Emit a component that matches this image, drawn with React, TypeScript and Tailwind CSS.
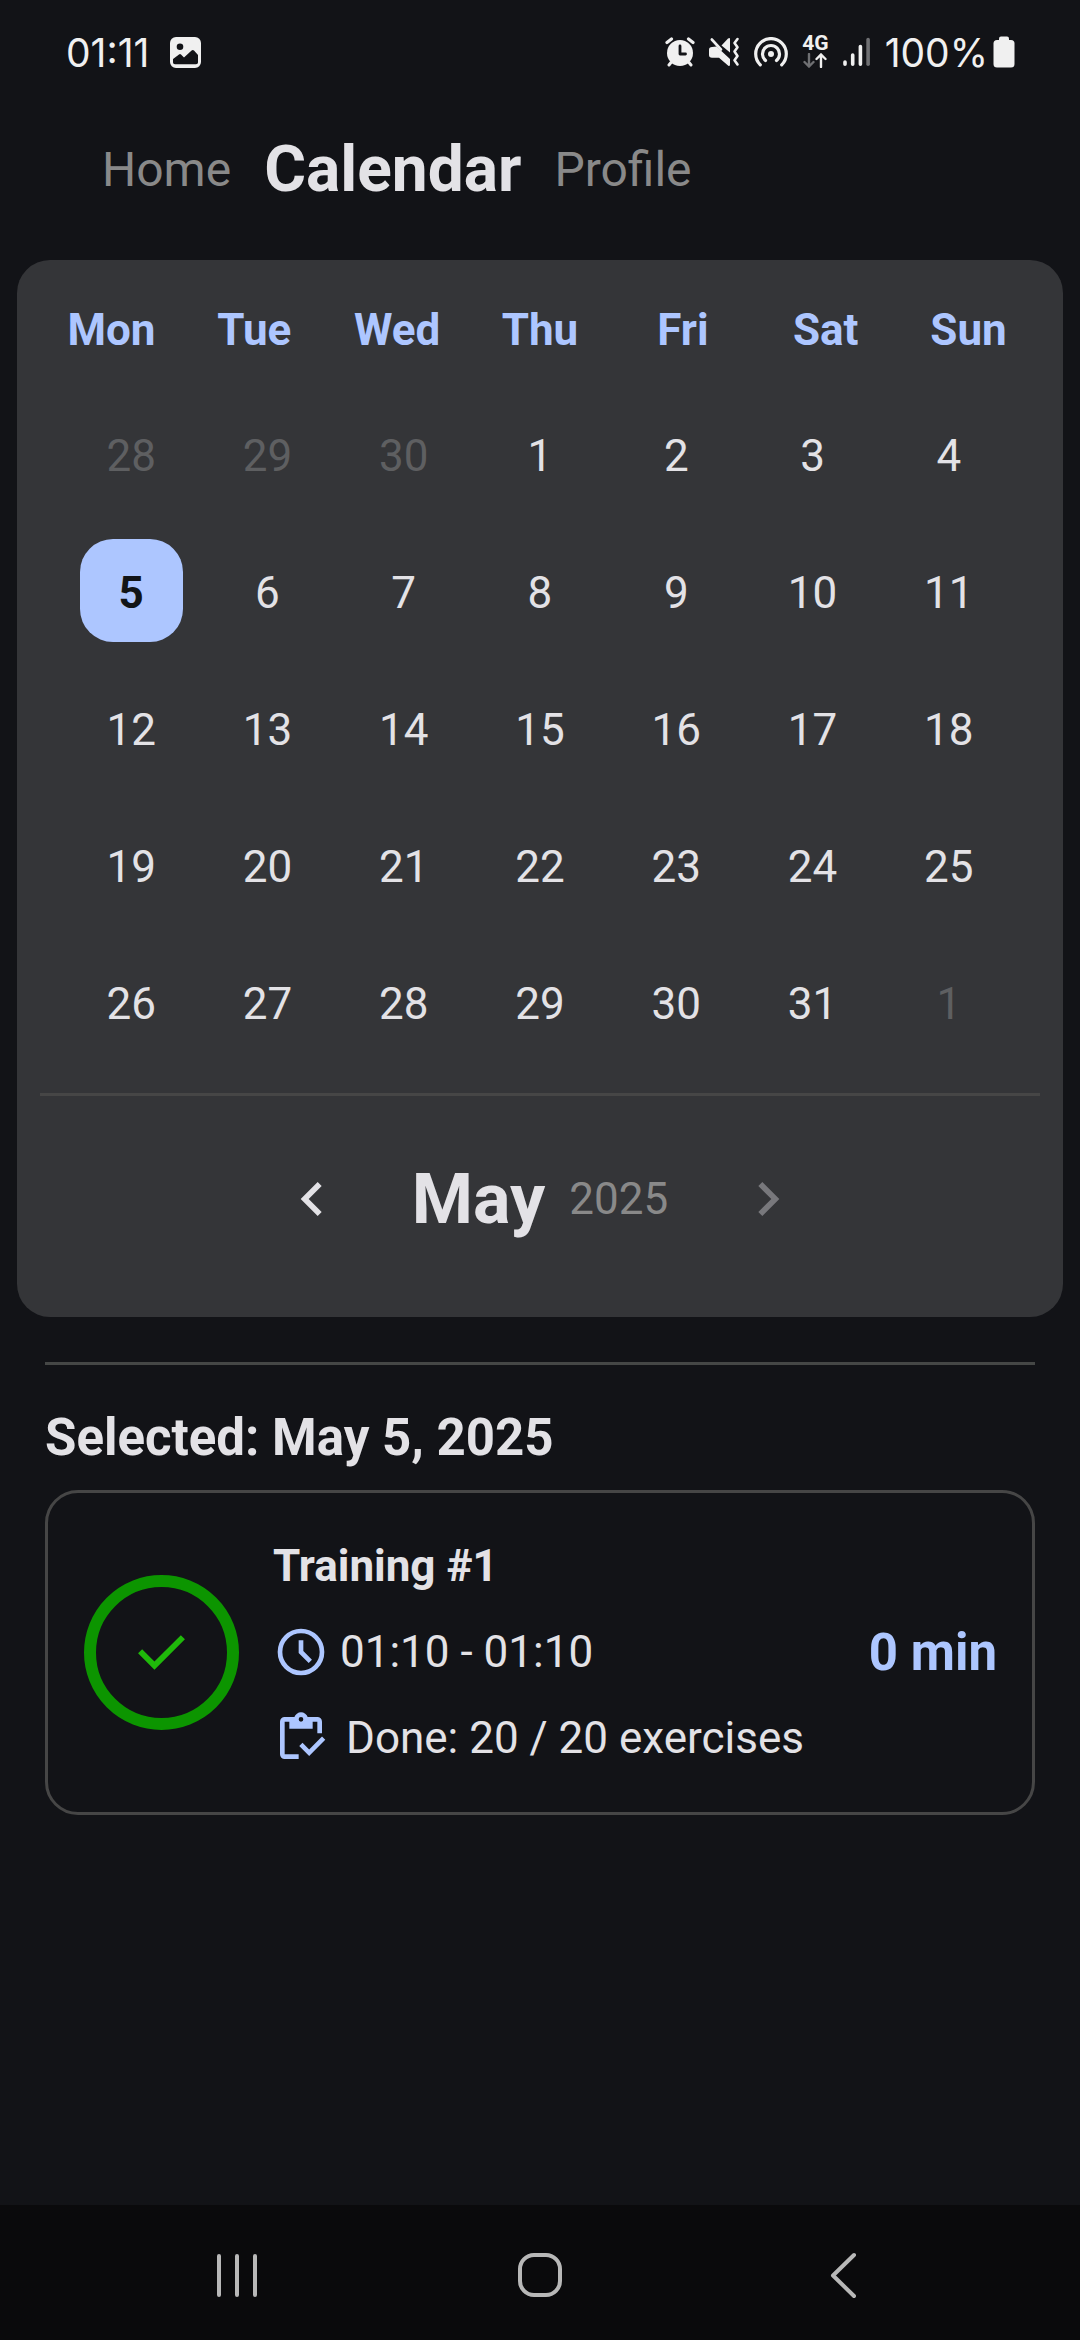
import React from "react";

const WEEKDAYS = ["Mon", "Tue", "Wed", "Thu", "Fri", "Sat", "Sun"];

type Day = { day: number; outside: boolean };

const DAYS: Day[] = [
  ...[28, 29, 30].map((day) => ({ day, outside: true })),
  ...Array.from({ length: 31 }, (_, i) => ({ day: i + 1, outside: false })),
  { day: 1, outside: true },
];

const SELECTED = 5;

function ImageIcon() {
  return (
    <svg viewBox="0 0 31 31" className="size-[31px]" aria-hidden="true">
      <path
        fill="#f0f0f0"
        fillRule="evenodd"
        d="M6 0h19a6 6 0 0 1 6 6v19a6 6 0 0 1-6 6H6a6 6 0 0 1-6-6V6a6 6 0 0 1 6-6zM10 6.400a3.300 3.300 0 1 0 0 6.600 3.300 3.300 0 0 0 0-6.600zM3 22v3.500Q3 27.300 5 27.300h21Q28 27.300 28 25.500V18l-4-4.400q-1.200-1-2.400 0L14 20.500l-3-3q-1-.8-2 0z"
      />
    </svg>
  );
}

function AlarmIcon() {
  return (
    <svg viewBox="0 0 30 30" className="size-[30px]" aria-hidden="true">
      <circle cx="15" cy="16" r="13" fill="#f0f0f0" />
      <path d="M2 5.500 6.500 2M28 5.500 23.500 2" stroke="#f0f0f0" strokeWidth="3.200" strokeLinecap="round" />
      <path d="M6 25.500 4 28M24 25.500l2 2.500" stroke="#f0f0f0" strokeWidth="3" strokeLinecap="round" />
      <path d="M15 9v8h5.500" stroke="#121317" strokeWidth="2.800" fill="none" strokeLinecap="round" strokeLinejoin="round" />
    </svg>
  );
}

function MuteVibrateIcon() {
  return (
    <svg viewBox="0 0 31 30" className="h-[30px] w-[31px]" aria-hidden="true">
      <path d="M21 2v13.500L12.500 8.500 19 1.600Q21 0 21 2z" fill="#f0f0f0" />
      <path d="M7.500 9.500 21 22v5.500q0 2.300-2 .9L10 20.800H3q-3 0-3-2.700v-5.400q0-2.800 3-2.800z" fill="#f0f0f0" />
      <path d="M2.800 2.500 12 12.500" stroke="#f0f0f0" strokeWidth="2.600" strokeLinecap="round" />
      <path
        d="m28.500 2-3 4 3 4.300-3 4.300 3 4.300-3 4.300 3 4.300"
        stroke="#f0f0f0"
        strokeWidth="2.600"
        fill="none"
        strokeLinecap="round"
        strokeLinejoin="round"
      />
    </svg>
  );
}

function HotspotIcon() {
  return (
    <svg viewBox="0 0 34 30" className="h-[30px] w-[34px]" aria-hidden="true">
      <g fill="none" stroke="#f0f0f0" strokeWidth="3.200" strokeLinecap="round">
        <path d="M6.300 27.800a15.300 15.300 0 1 1 21.400 0" />
        <path d="M11.500 23.500a8.500 8.500 0 1 1 11 0" />
      </g>
      <circle cx="17" cy="17" r="3" fill="#f0f0f0" />
    </svg>
  );
}

function DataArrowsIcon() {
  return (
    <svg viewBox="0 0 24 15" className="h-[15px] w-[24px]" aria-hidden="true">
      <path d="M6 1v12M1.500 9 6 13.500 10.500 9" stroke="#6f7073" strokeWidth="2.400" fill="none" strokeLinecap="round" />
      <path d="M18 14V2M13.500 6 18 1.500 22.500 6" stroke="#f0f0f0" strokeWidth="2.400" fill="none" strokeLinecap="round" />
    </svg>
  );
}

function SignalIcon() {
  return (
    <svg viewBox="0 0 28 30" className="h-[30px] w-[28px]" aria-hidden="true">
      <g strokeWidth="3.600" strokeLinecap="round" stroke="#f0f0f0">
        <path d="M2 25v2.200M9.700 18v9.200M17.400 9.500v17.700" />
        <path d="M25.100 2.500v24.700" stroke="#6f7073" />
      </g>
    </svg>
  );
}

function BatteryIcon() {
  return (
    <svg viewBox="0 0 22 32" className="h-[32px] w-[22px]" aria-hidden="true">
      <rect x="6" y="0.500" width="10" height="8" rx="2" fill="#f0f0f0" />
      <rect x="0.500" y="4" width="21" height="27.500" rx="3.500" fill="#f0f0f0" />
    </svg>
  );
}

function StatusBar() {
  return (
    <div className="flex h-[104px] items-center justify-between pr-[65px] pl-[66px] font-['Inter',sans-serif] text-[39px] leading-none text-[#f0f0f0]">
      <div className="flex items-center gap-[21px]">
        <span>01:11</span>
        <ImageIcon />
      </div>
      <div className="flex items-center gap-[14px]">
        <AlarmIcon />
        <MuteVibrateIcon />
        <HotspotIcon />
        <div className="flex flex-col items-center gap-[2px]">
          <span className="font-['Roboto',sans-serif] text-[21px] leading-[15px] font-bold">4G</span>
          <DataArrowsIcon />
        </div>
        <SignalIcon />
        <div className="flex items-center gap-[5px]">
          <span>100%</span>
          <BatteryIcon />
        </div>
      </div>
    </div>
  );
}

function Tabs() {
  return (
    <nav className="mb-[25px] flex h-[131px] items-center gap-[33px] pl-[102px] text-[48px] leading-none text-[#898989]">
      <a href="#home">Home</a>
      <a href="#calendar" aria-current="page" className="text-[64px] font-bold text-[#e3e2e6]">
        Calendar
      </a>
      <a href="#profile">Profile</a>
    </nav>
  );
}

function DayCell({ day, outside }: Day) {
  const selected = !outside && day === SELECTED;
  const tone = selected
    ? "bg-[#adc6ff] font-bold text-[#111417]"
    : outside
      ? "text-[#5e5f61]"
      : "text-[#e3e2e6]";
  return (
    <div className="flex h-[137px] items-center justify-center">
      <button type="button" aria-pressed={selected} className={`size-[103px] rounded-[33px] pt-1 text-[44px] leading-none ${tone}`}>
        {day}
      </button>
    </div>
  );
}

function Chevron({ d }: { d: string }) {
  return (
    <svg viewBox="0 0 24 24" className="size-[68px]" fill="currentColor" aria-hidden="true">
      <path d={d} />
    </svg>
  );
}

function Calendar() {
  return (
    <section aria-label="Calendar" className="mx-[17px] rounded-[33px] bg-[#343538] px-[23px] pt-[14px] pb-[52px]">
      <div className="grid h-[111px] grid-cols-7 items-center text-center text-[44px] leading-none font-bold text-[#adc6ff]">
        {WEEKDAYS.map((name) => (
          <span key={name}>{name}</span>
        ))}
      </div>
      <div className="grid grid-cols-7 px-[23px]">
        {DAYS.map((d, i) => (
          <DayCell key={i} {...d} />
        ))}
      </div>
      <hr className="mt-[23px] border-t-[3px] border-[#464646]" />
      <div className="mt-[37px] flex items-center justify-center gap-[34px]">
        <button type="button" aria-label="Previous month" className="flex size-[132px] items-center justify-center text-[#e3e2e6]">
          <Chevron d="M15.410 7.410 14 6l-6 6 6 6 1.410-1.410L10.830 12z" />
        </button>
        <h2 className="flex items-center gap-6 leading-none">
          <span className="text-[70px] font-bold text-[#e3e2e6]">May</span>
          <span className="text-[44px] font-normal text-[#898989]">2025</span>
        </h2>
        <button type="button" aria-label="Next month" className="flex size-[132px] items-center justify-center text-[#78787c]">
          <Chevron d="M10 6 8.590 7.410 13.170 12l-4.580 4.590L10 18l6-6z" />
        </button>
      </div>
    </section>
  );
}

function ClockIcon() {
  return (
    <svg viewBox="0 0 24 24" className="size-[56px] text-[#adc6ff]" aria-hidden="true">
      <circle cx="12" cy="12" r="9" fill="none" stroke="currentColor" strokeWidth="2" />
      <path fill="currentColor" d="m15.300 16.700 1.400-1.400-3.700-3.700V7h-2v5.400z" />
    </svg>
  );
}

function ClipboardIcon() {
  return (
    <svg viewBox="0 0 24 24" className="size-[56px] text-[#adc6ff]" fill="currentColor" aria-hidden="true">
      <path
        fillRule="evenodd"
        d="M21 10h-2V5h-2v3H7V5H5v14h6v2H5q-.825 0-1.412-.587T3 19V5q0-.825.588-1.412T5 3h4.175q.275-.875 1.075-1.437T12 1t1.788.563T14.850 3H19q.825 0 1.413.588T21 5zM12 3a1 1 0 1 0 0 2 1 1 0 0 0 0-2z"
      />
      <path d="M22.400 12.800 21 11.400l-5.500 5.500-2.850-2.850-1.400 1.400 4.250 4.250z" />
    </svg>
  );
}

function TrainingCard() {
  return (
    <article className="mx-[45px] flex items-center rounded-[33px] border-[3px] border-[#464646] pt-[30px] pr-[35px] pb-[31px] pl-9 text-[44px] leading-none text-[#e3e2e6]">
      <div className="mr-[34px] flex size-[155px] shrink-0 items-center justify-center rounded-full border-[12px] border-[#0c9500]">
        <svg viewBox="0 0 24 24" className="size-[69px]" fill="#1fb90a" role="img" aria-label="Completed">
          <path d="m9.550 18-5.700-5.700 1.425-1.425L9.550 15.150l9.175-9.175L20.150 7.400z" />
        </svg>
      </div>
      <div className="flex-1">
        <h3 className="flex h-[86px] items-center font-bold">Training #1</h3>
        <p className="flex h-[86px] items-center gap-[11px]">
          <ClockIcon />
          01:10 - 01:10
        </p>
        <p className="flex h-[86px] items-center gap-[17px]">
          <ClipboardIcon />
          Done: 20 / 20 exercises
        </p>
      </div>
      <span className="text-[51px] font-bold text-[#adc6ff]">0 min</span>
    </article>
  );
}

function NavigationBar() {
  const stroke = { fill: "none", stroke: "#b8b8b8", strokeWidth: 4, strokeLinecap: "round", strokeLinejoin: "round" } as const;
  return (
    <div className="mt-auto flex h-[135px] items-center justify-center bg-[#0a0a0c] px-[86px] pt-1">
      <button type="button" aria-label="Recent apps" className="flex flex-1 justify-center">
        <svg viewBox="0 0 48 48" className="size-12" aria-hidden="true" {...stroke}>
          <path d="M6 5v39M24 5v39M42 5v39" />
        </svg>
      </button>
      <button type="button" aria-label="Home" className="flex flex-1 justify-center">
        <svg viewBox="0 0 48 48" className="size-12" aria-hidden="true" {...stroke}>
          <rect x="4" y="4" width="40" height="40" rx="14" />
        </svg>
      </button>
      <button type="button" aria-label="Back" className="flex flex-1 justify-center">
        <svg viewBox="0 0 48 48" className="size-12" aria-hidden="true" {...stroke}>
          <path d="M35 4 14 24.500 35 45" />
        </svg>
      </button>
    </div>
  );
}

export default function App() {
  return (
    <div className="flex min-h-screen flex-col bg-[#121317] font-['Roboto',sans-serif]">
      <StatusBar />
      <Tabs />
      <main>
        <Calendar />
        <hr className="mx-[45px] mt-[45px] border-t-[3px] border-[#454746]" />
        <h2 className="mx-[45px] mt-5 text-[51px] leading-[105px] font-bold text-[#e3e2e6]">Selected: May 5, 2025</h2>
        <TrainingCard />
      </main>
      <NavigationBar />
    </div>
  );
}
